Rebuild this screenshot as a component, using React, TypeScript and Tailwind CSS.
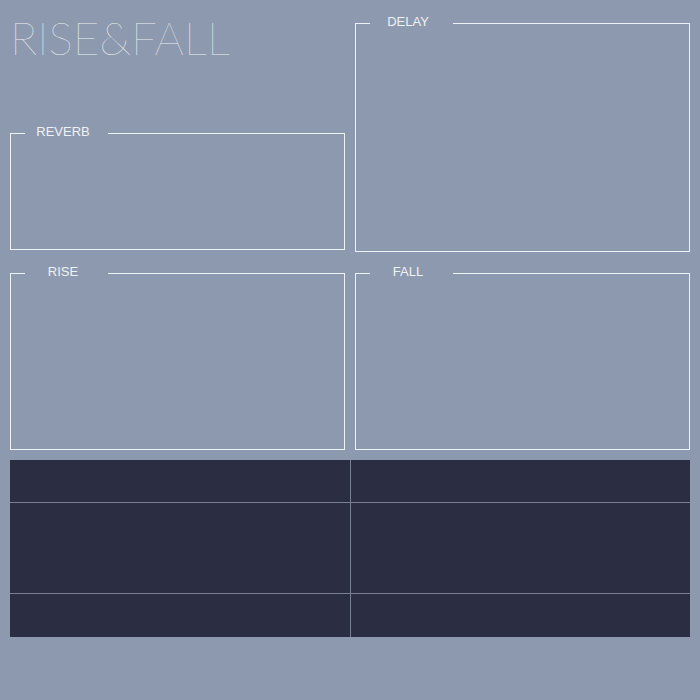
import React from "react";

function Group({ label, className }: { label: string; className: string }) {
  return (
    <fieldset className={`border border-[#edf2f4] px-[14px] ${className}`}>
      <legend className="text-left">
        <span className="block w-[83px] pr-[7px] text-center text-[13px] leading-[16px] text-[#edf2f4] -translate-y-px">
          {label}
        </span>
      </legend>
    </fieldset>
  );
}

export default function App() {
  return (
    <div
      className="w-[700px] h-[700px] bg-[#8d99ae] p-[10px] flex flex-col"
      style={{ fontFamily: '"Liberation Sans", Arial, sans-serif' }}
    >
      <div className="grid grid-cols-[335px_335px] gap-x-[10px]">
        <div className="flex flex-col">
          <div className="h-[115px]">
            <h1
              className="text-[46px] leading-[56px] font-extralight text-[#edf2f4]"
              style={{ fontFamily: "Lato, sans-serif" }}
            >
              RISE&amp;FALL
            </h1>
          </div>
          <Group label="REVERB" className="h-[125px]" />
        </div>
        <Group label="DELAY" className="mt-[5px] h-[237px]" />
      </div>

      <div className="grid grid-cols-[335px_335px] gap-x-[10px] mt-[13px]">
        <Group label="RISE" className="h-[185px]" />
        <Group label="FALL" className="h-[185px]" />
      </div>

      <div className="mt-[10px] grid grid-cols-[340px_1fr] grid-rows-[42px_90px_43px] gap-px bg-[#7a8094]">
        <div className="bg-[#2b2d42]" />
        <div className="bg-[#2b2d42]" />
        <div className="bg-[#2b2d42]" />
        <div className="bg-[#2b2d42]" />
        <div className="bg-[#2b2d42]" />
        <div className="bg-[#2b2d42]" />
      </div>
    </div>
  );
}
